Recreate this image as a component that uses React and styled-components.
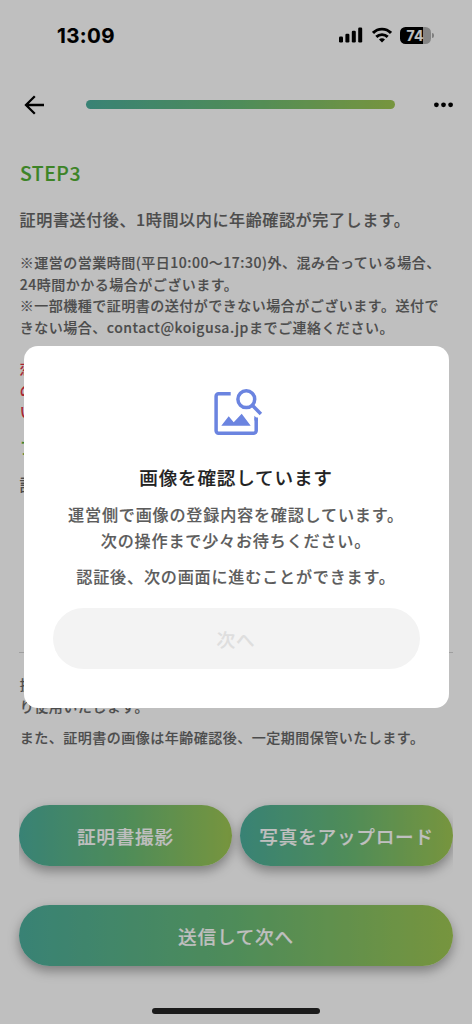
import React from 'react'
import styled, { createGlobalStyle } from 'styled-components';

const GlobalStyle = createGlobalStyle`
  * {
    box-sizing: border-box;
  }
  body {
    margin: 0;
    background: #fff;
    font-family: 'Noto Sans CJK JP', 'Noto Sans', sans-serif;
    font-weight: 500;
    color: #666;
    -webkit-text-stroke: 0.15px currentColor;
  }
  p, h1, h2 {
    margin: 0;
  }
  button {
    border: 0;
    padding: 0;
    background: none;
    font-family: inherit;
    cursor: pointer;
  }
`;

const gradient = 'linear-gradient(90deg, #4cae9c 0%, #69bb77 50%, #9fc753 100%)';

const Screen = styled.div`
  display: flex;
  flex-direction: column;
  width: 472px;
  height: 1024px;
  overflow: hidden;
`;

const StatusBar = styled.div`
  display: flex;
  align-items: center;
  justify-content: space-between;
  height: 70px;
  padding: 0 38px 0 57px;
  color: #000;
`;

const Clock = styled.span`
  font-family: Inter, sans-serif;
  font-size: 20.5px;
  font-weight: 700;
  letter-spacing: 0.4px;
`;

const StatusIcons = styled.div`
  display: flex;
  align-items: center;
  gap: 8.5px;
`;

const Battery = styled.div`
  display: flex;
  align-items: center;
  gap: 1px;
  &::after {
    content: '';
    width: 2px;
    height: 5px;
    border-radius: 0 2px 2px 0;
    background: #aaa;
  }
`;

const BatteryBody = styled.div`
  width: 31px;
  height: 17px;
  padding-right: 1px;
  border-radius: 5.5px;
  background: linear-gradient(90deg, #000 75%, #b2b2b2 75%);
  color: #fff;
  font-family: Inter, sans-serif;
  font-size: 14px;
  font-weight: 700;
  line-height: 17px;
  text-align: center;
`;

const Header = styled.header`
  display: flex;
  align-items: center;
  justify-content: space-between;
  height: 69px;
  padding: 0 18px 0 23.5px;
`;

const IconButton = styled.button`
  display: flex;
  color: #000;
`;

const Progress = styled.div`
  width: 309px;
  height: 9px;
  margin-left: 4px;
  border-radius: 5px;
  background: ${gradient};
`;

const Content = styled.main`
  display: flex;
  flex-direction: column;
  flex: 1;
  padding: 18px 19px 0;
`;

const Step = styled.h1`
  padding-left: 1px;
  font-size: 19.4px;
  font-weight: 500;
  line-height: 32px;
  letter-spacing: 0.5px;
  color: #52b033;
`;

const Lead = styled.p`
  margin-top: 16px;
  padding-left: 0.6px;
  font-size: 16.1px;
  line-height: 28px;
  letter-spacing: 0.55px;
`;

const Note = styled.p`
  margin-top: ${({ $top }) => $top || 0}px;
  padding-left: 0.8px;
  font-size: 14px;
  line-height: 21.7px;
  letter-spacing: 0.5px;
  white-space: nowrap;
  color: ${({ $color }) => $color || '#666'};
`;

const SubHeading = styled.p`
  margin-top: 12px;
  padding-left: 1px;
  font-size: 16.1px;
  line-height: 24px;
  color: #52b033;
`;

const UploadArea = styled.section`
  height: 191.5px;
  margin-top: 3px;
  border-bottom: 1px solid #d5d5d5;
`;

const UploadLabel = styled.p`
  padding-left: 0.6px;
  font-size: 16.1px;
  line-height: 44px;
  letter-spacing: 0.6px;
`;

const ButtonRow = styled.div`
  display: flex;
  gap: 8.5px;
  margin-top: 56px;
  overflow-x: clip;
`;

const PillButton = styled.button`
  flex: 1;
  height: 61.5px;
  border-radius: 31px;
  background: ${gradient};
  box-shadow: 0 5px 12px rgba(0, 0, 0, 0.35);
  color: #fff;
  font-size: 18.6px;
  font-weight: 500;
  letter-spacing: 0.8px;
  white-space: nowrap;
`;

const SubmitButton = styled(PillButton)`
  flex: none;
  margin-top: 38.5px;
`;

const HomeIndicator = styled.div`
  width: 168px;
  height: 6px;
  margin: auto auto 10px;
  border-radius: 3px;
  background: #252525;
`;

const Overlay = styled.div`
  position: fixed;
  inset: 0;
  display: flex;
  justify-content: center;
  align-items: flex-start;
  padding-top: 346px;
  background: rgba(0, 0, 0, 0.25);
`;

const Modal = styled.div`
  display: flex;
  flex-direction: column;
  align-items: center;
  width: 425px;
  height: 362px;
  padding: 42px 29px 0;
  border-radius: 14px;
  background: #fff;
`;

const ModalIcon = styled.div`
  display: flex;
  padding-left: 3px;
`;

const ModalTitle = styled.h2`
  margin-top: 22.5px;
  font-size: 18.6px;
  font-weight: 500;
  line-height: 32px;
  letter-spacing: 0.8px;
  color: #222;
`;

const ModalText = styled.p`
  margin-top: ${({ $top }) => $top}px;
  font-size: 16.1px;
  line-height: 26.4px;
  letter-spacing: 0.8px;
  text-align: center;
  color: #5c5c5c;
`;

const DisabledButton = styled.button`
  width: 100%;
  height: 61px;
  margin-top: 18px;
  border-radius: 31px;
  background: #f3f3f3;
  color: #dedede;
  font-size: 18.6px;
  font-weight: 500;
  letter-spacing: 0.8px;
`;

const SignalIcon = () => (
  <svg width="24" height="16" viewBox="0 0 24 16" fill="currentColor">
    <rect x="0" y="9.5" width="4" height="6" rx="1.2" />
    <rect x="6.4" y="6.8" width="4" height="8.7" rx="1.2" />
    <rect x="12.8" y="3.8" width="4" height="11.7" rx="1.2" />
    <rect x="19.2" y="0.5" width="4" height="15" rx="1.2" />
  </svg>
);

const WifiIcon = () => (
  <svg width="20" height="16" viewBox="0 0 20 16" fill="none" stroke="currentColor" strokeWidth="2.9">
    <path d="M1 5.9C6 .8 14 .8 19 5.9" />
    <path d="M4.3 9.9c3.2-3.1 8.2-3.1 11.4 0" />
    <path d="M10 15.4l-3-3c1.6-1.6 4.4-1.6 6 0z" fill="currentColor" stroke="none" />
  </svg>
);

const BackIcon = () => (
  <svg width="20" height="20" viewBox="0 0 20 20" fill="none" stroke="currentColor" strokeWidth="2.3">
    <path d="M10.8 1.2L2 10l8.8 8.8M2 10h18" strokeLinejoin="miter" />
  </svg>
);

const MoreIcon = () => (
  <svg width="20" height="6" viewBox="0 0 20 6" fill="currentColor">
    <circle cx="2.4" cy="2.8" r="2.4" />
    <circle cx="9.5" cy="2.8" r="2.4" />
    <circle cx="16.6" cy="2.8" r="2.4" />
  </svg>
);

const ImageSearchIcon = () => (
  <svg width="50" height="50" viewBox="0 0 50 50" fill="none" stroke="#6b84e0" strokeWidth="3.5">
    <path d="M17.7 5.8H5.5A2.4 2.4 0 0 0 3.1 8.2V42.8a2.4 2.4 0 0 0 2.4 2.4H40.8a2.4 2.4 0 0 0 2.4-2.4V29.5" />
    <path d="M41.4 27.7l3.6 3.7v1h-3.6z" fill="#6b84e0" stroke="none" />
    <circle cx="33.3" cy="11.2" r="8.4" />
    <path d="M39.3 17.3l8.6 8.6" />
    <path d="M8.3 37.7l7.4-9.4 5 6 8-8.6 9 12z" fill="#6b84e0" stroke="none" />
  </svg>
);

const App = () => {
  return (
    <>
      <GlobalStyle />
      <Screen>
        <StatusBar>
          <Clock>13:09</Clock>
          <StatusIcons>
            <SignalIcon />
            <WifiIcon />
            <Battery>
              <BatteryBody>74</BatteryBody>
            </Battery>
          </StatusIcons>
        </StatusBar>
        <Header>
          <IconButton aria-label="戻る"><BackIcon /></IconButton>
          <Progress />
          <IconButton aria-label="メニュー"><MoreIcon /></IconButton>
        </Header>
        <Content>
          <Step>STEP3</Step>
          <Lead>証明書送付後、1時間以内に年齢確認が完了します。</Lead>
          <Note $top={19}>
            ※運営の営業時間(平日10:00〜17:30)外、混み合っている場合、<br />
            24時間かかる場合がございます。<br />
            ※一部機種で証明書の送付ができない場合がございます。送付で<br />
            きない場合、contact@koigusa.jpまでご連絡ください。
          </Note>
          <Note $top={19} $color="#e5303f">
            恋<br />
            の<br />
            い
          </Note>
          <SubHeading>ア</SubHeading>
          <UploadArea>
            <UploadLabel>証明書</UploadLabel>
          </UploadArea>
          <Note $top={21}>
            提<br />
            り使用いたします。
          </Note>
          <Note $top={9}>また、証明書の画像は年齢確認後、一定期間保管いたします。</Note>
          <ButtonRow>
            <PillButton>証明書撮影</PillButton>
            <PillButton>写真をアップロード</PillButton>
          </ButtonRow>
          <SubmitButton>送信して次へ</SubmitButton>
          <HomeIndicator />
        </Content>
      </Screen>
      <Overlay>
        <Modal role="dialog">
          <ModalIcon><ImageSearchIcon /></ModalIcon>
          <ModalTitle>画像を確認しています</ModalTitle>
          <ModalText $top={8}>
            運営側で画像の登録内容を確認しています。<br />
            次の操作まで少々お待ちください。
          </ModalText>
          <ModalText $top={10}>認証後、次の画面に進むことができます。</ModalText>
          <DisabledButton disabled>次へ</DisabledButton>
        </Modal>
      </Overlay>
    </>
  )
}

export default App
